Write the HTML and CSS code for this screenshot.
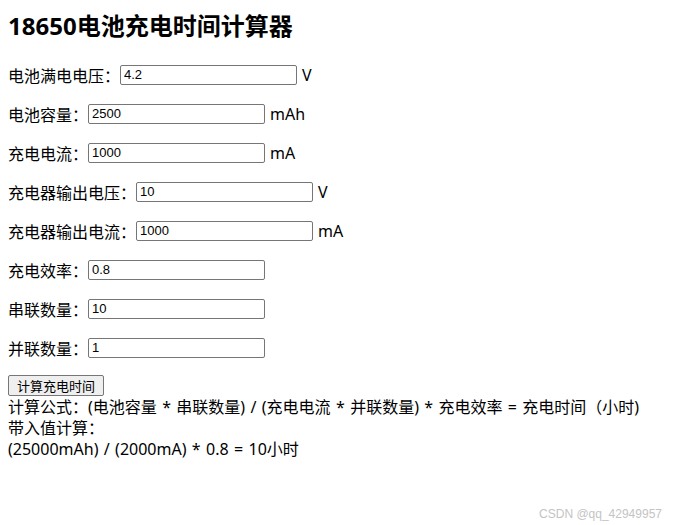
FILE: index.html
```html
<!DOCTYPE html>
<html>
<head>
  <meta charset="utf-8">
  <title>18650电池充电时间计算器</title>
  <link rel="stylesheet" href="styles.css">
</head>
<body>
  <h2>18650电池充电时间计算器</h2>

  <div class="row">
    <label for="fullVoltage">电池满电电压：</label>
    <input type="text" id="fullVoltage" value="4.2">
    <span class="unit">V</span>
  </div>
  <div class="row">
    <label for="capacity">电池容量：</label>
    <input type="text" id="capacity" value="2500">
    <span class="unit">mAh</span>
  </div>
  <div class="row">
    <label for="current">充电电流：</label>
    <input type="text" id="current" value="1000">
    <span class="unit">mA</span>
  </div>
  <div class="row">
    <label for="outVoltage">充电器输出电压：</label>
    <input type="text" id="outVoltage" value="10">
    <span class="unit">V</span>
  </div>
  <div class="row">
    <label for="outCurrent">充电器输出电流：</label>
    <input type="text" id="outCurrent" value="1000">
    <span class="unit">mA</span>
  </div>
  <div class="row">
    <label for="efficiency">充电效率：</label>
    <input type="text" id="efficiency" value="0.8">
  </div>
  <div class="row">
    <label for="series">串联数量：</label>
    <input type="text" id="series" value="10">
  </div>
  <div class="row">
    <label for="parallel">并联数量：</label>
    <input type="text" id="parallel" value="1">
  </div>

  <div class="actions">
    <button id="calc">计算充电时间</button>
  </div>
  <div class="result">
    <div>计算公式：(电池容量 * 串联数量) / (充电电流 * 并联数量) * 充电效率 = 充电时间（小时)</div>
    <div>带入值计算：</div>
    <div id="detail">(25000mAh) / (2000mA) * 0.8 = 10小时</div>
  </div>

  <div class="watermark">CSDN @qq_42949957</div>
</body>
</html>
```

FILE: styles.css
```css
body {
  font-family: "Noto Sans", "Noto Sans CJK SC", sans-serif;
  font-size: 16px;
  margin: 8px;
  color: #000;
  background: #fff;
}
h2 {
  font-size: 24px;
  line-height: 32px;
  margin: 2px 0 22px;
}
.row {
  display: flex;
  align-items: center;
  height: 21px;
  margin-bottom: 18px;
}
.row label {
  white-space: nowrap;
}
.row input {
  width: 177px;
  height: 20px;
  padding: 1px 3px;
  border: 1px solid #767676;
  border-radius: 2px;
  box-sizing: border-box;
  font-family: "Liberation Sans", Arial, sans-serif;
  font-size: 13px;
  color: #000;
}
.unit {
  margin-left: 5px;
}
.actions {
  height: 21px;
  margin-top: -2px;
  margin-bottom: 2px;
}
button {
  font-family: "Noto Sans CJK SC", sans-serif;
  font-size: 13px;
  line-height: 17px;
  height: 21px;
  padding: 1px 8px;
  background: #efefef;
  border: 1px solid #767676;
  border-radius: 2px;
  color: #000;
}
.result {
  line-height: 21px;
  word-spacing: 1.2px;
}
.watermark {
  position: absolute;
  right: 16px;
  bottom: 4px;
  font-size: 12px;
  color: #c4c4c4;
  font-family: "Liberation Sans", Arial, sans-serif;
}
```
